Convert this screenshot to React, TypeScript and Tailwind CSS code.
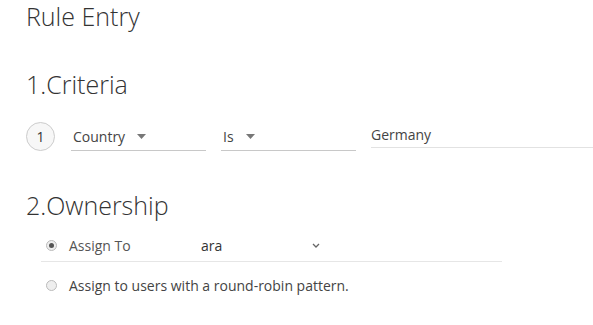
import React from "react";

function Caret() {
  return (
    <svg width="9" height="5" viewBox="0 0 9 5" className="ml-[12px]">
      <path d="M0 0 L9 0 L4.5 5 Z" fill="#777" />
    </svg>
  );
}

function Chevron() {
  return (
    <svg width="8" height="5" viewBox="0 0 8 5">
      <path d="M1 1 L4 4 L7 1" fill="none" stroke="#666" strokeWidth="1.3" />
    </svg>
  );
}

export default function App() {
  return (
    <div
      className="w-[593px] h-[325px] bg-white text-[#444] overflow-hidden pl-[26px]"
      style={{ fontFamily: "'Open Sans', Lato, sans-serif" }}
    >
      <h1 className="text-[25px] font-light leading-[25px] pt-[4px] text-[#333]">Rule Entry</h1>
      <h2 className="text-[25px] font-light leading-[25px] mt-[43px] text-[#333]">1.Criteria</h2>
      <div className="flex items-center mt-[24px]">
        <div className="w-[29px] h-[29px] rounded-full border border-[#ccc] bg-[#f7f7f7] flex items-center justify-center text-[14px] text-[#333] shrink-0">
          1
        </div>
        <div className="ml-[16px] w-[135px] h-[30px] border-b border-[#c8c8c8] flex items-center pl-[2px] pt-[1px] text-[14px]">
          Country
          <Caret />
        </div>
        <div className="ml-[15px] w-[135px] h-[30px] border-b border-[#c8c8c8] flex items-center pl-[2px] pt-[1px] text-[14px]">
          Is
          <Caret />
        </div>
        <div className="ml-[15px] flex-1 h-[27px] -mt-[3px] border-b border-[#e2e2e2] flex items-center text-[14px]">
          Germany
        </div>
      </div>
      <h2 className="text-[25px] font-light leading-[25px] mt-[42px] text-[#333]">2.Ownership</h2>
      <div className="ml-[15px] w-[461px] mt-[12px]">
        <div className="flex items-center h-[32px] border-b border-[#e6e6e6] pl-[5px]">
          <span className="w-[11px] h-[11px] rounded-full border border-[#bbb] bg-[#eee] flex items-center justify-center shrink-0">
            <span className="w-[5px] h-[5px] rounded-full bg-[#555]" />
          </span>
          <span className="ml-[12px] w-[132px] text-[14px] text-[#555]">Assign To</span>
          <span className="text-[14px] text-[#333] w-[111px]">ara</span>
          <Chevron />
        </div>
        <div className="flex items-center h-[46px] pl-[5px]">
          <span className="w-[11px] h-[11px] rounded-full border border-[#bbb] bg-[#eee] shrink-0" />
          <span className="ml-[12px] text-[14px] text-[#444]">Assign to users with a round-robin pattern.</span>
        </div>
      </div>
    </div>
  );
}
